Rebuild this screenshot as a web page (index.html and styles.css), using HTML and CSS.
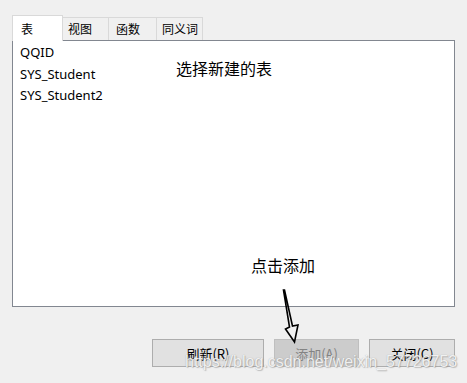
FILE: index.html
```html
<!DOCTYPE html>
<html lang="zh-CN">
<head>
    <meta charset="UTF-8">
    <meta name="viewport" content="width=device-width, initial-scale=1.0">
    <title>添加表</title>
    <link rel="stylesheet" href="styles.css">
</head>
<body>
    <div id="dialog">
        <div class="tab-bar">
            <div class="tab tab-active">表</div>
            <div class="tab tab-view">视图</div>
            <div class="tab tab-func">函数</div>
            <div class="tab tab-syn">同义词</div>
        </div>
        <div class="tab-panel">
            <ul class="table-list">
                <li>QQID</li>
                <li>SYS_Student</li>
                <li>SYS_Student2</li>
            </ul>
            <span class="note note-select">选择新建的表</span>
            <span class="note note-add">点击添加</span>
        </div>
        <div class="btn-row">
            <button class="btn btn-refresh">刷新(R)</button>
            <button class="btn btn-add" disabled>添加(A)</button>
            <button class="btn btn-close">关闭(C)</button>
        </div>
        <!-- 手画的箭头 -->
        <svg class="arrow" width="30" height="60" viewBox="0 0 30 60">
            <path d="M3.5 9 L9.5 46 L5.5 48 L14.5 61 L18 44 L12.5 45 L4.5 9 Z" fill="none" stroke="#000" stroke-width="1.6" stroke-linejoin="miter"/>
        </svg>
        <div class="watermark">https://blog.csdn.net/weixin_57726753</div>
    </div>
</body>
</html>
```

FILE: styles.css
```css
:root {
    --bg-color: #f0f0f0;
    --tab-border: #d9d9d9;
    --panel-border: #828790;
    --btn-border: #adadad;
}
body{
    margin: 0;
    background: var(--bg-color);
    font-family: "Noto Sans", "Noto Sans CJK SC", sans-serif;
    color: #000;
}
#dialog{
    position: relative;
    width: 467px;
    height: 383px;
    padding: 15px 12px 0;
    box-sizing: border-box;
    overflow: hidden;
}
.tab-bar{
    display: flex;
    align-items: flex-end;
    height: 25px;
}
.tab{
    box-sizing: border-box;
    height: 23px;
    padding: 3px 0 0 5px;
    font-size: 12px;
    line-height: 16px;
    font-family: "Noto Sans CJK SC", sans-serif;
    background: var(--bg-color);
    border: 1px solid var(--tab-border);
    border-bottom: none;
    border-left: none;
}
.tab-active{
    position: relative;
    z-index: 1;
    width: 51px;
    height: 26px;
    margin-bottom: -1px;
    padding: 5px 0 0 8px;
    background: #fff;
    border-left: 1px solid var(--tab-border);
}
.tab-view{ width: 46px; }
.tab-func{ width: 48px; padding-left: 7px; }
.tab-syn{ width: 46px; }
.tab-panel{
    position: relative;
    box-sizing: border-box;
    height: 267px;
    background: #fff;
    border: 1px solid var(--panel-border);
}
.table-list{
    list-style: none;
    margin: 0;
    padding: 1px 0 0 7px;
    font-size: 13px;
    line-height: 21.5px;
}
.note{
    position: absolute;
    font-family: "Noto Sans CJK SC", sans-serif;
    font-size: 16px;
    line-height: 20px;
    white-space: nowrap;
}
.note-select{
    left: 163px;
    top: 17px;
}
.note-add{
    left: 238px;
    top: 214px;
}
.btn-row{
    display: flex;
    justify-content: flex-end;
    gap: 10px;
    margin-top: 32px;
}
.btn{
    box-sizing: border-box;
    height: 28px;
    padding: 0;
    font-family: "Noto Sans CJK SC", sans-serif;
    font-size: 13px;
    color: #000;
    background: #e1e1e1;
    border: 1px solid var(--btn-border);
}
.btn-refresh{ width: 112px; }
.btn-add{
    width: 85px;
    color: #838383;
    background: #cccccc;
    border-color: #bfbfbf;
}
.btn-close{ width: 86px; }
.arrow{
    position: absolute;
    left: 280px;
    top: 281px;
    overflow: visible;
}
.watermark{
    position: absolute;
    left: 185px;
    top: 353px;
    font-family: "Liberation Sans", sans-serif;
    font-size: 16px;
    color: rgba(255,255,255,0.85);
    text-shadow: 0 0 1px rgba(120,120,120,0.6), 1px 1px 1px rgba(150,150,150,0.5);
    white-space: nowrap;
}
```
